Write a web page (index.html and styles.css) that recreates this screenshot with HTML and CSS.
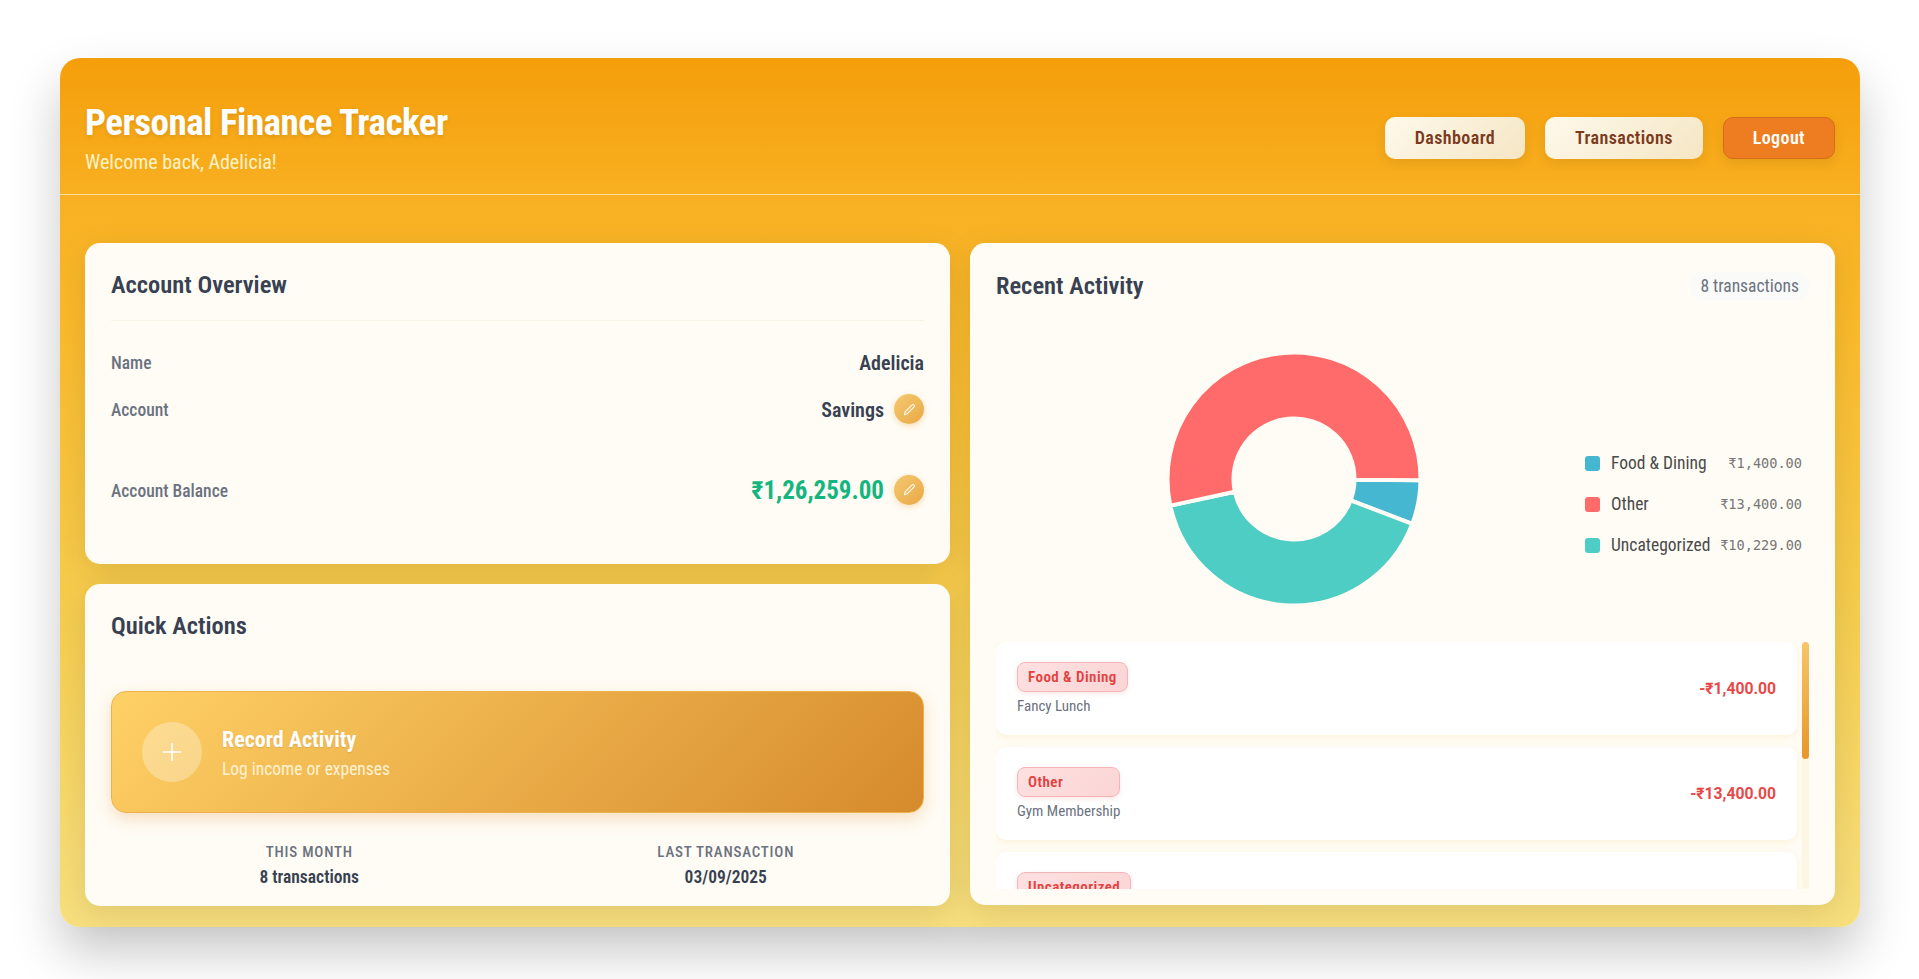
FILE: index.html
```html
<!DOCTYPE html>
<html lang="en">
<head>
    <meta charset="UTF-8">
    <meta name="viewport" content="width=device-width, initial-scale=1.0">
    <title>Personal Finance Tracker</title>
    <link rel="stylesheet" href="styles.css">
</head>
<body>
    <div class="app">
        <header class="header">
            <div class="brand">
                <h1>Personal Finance Tracker</h1>
                <p>Welcome back, Adelicia!</p>
            </div>
            <nav class="nav">
                <a class="nav-btn">Dashboard</a>
                <a class="nav-btn">Transactions</a>
                <a class="nav-btn logout">Logout</a>
            </nav>
        </header>

        <main class="main">
            <div class="left-col">
                <section class="card overview">
                    <h2 class="card-title">Account Overview</h2>
                    <div class="info-row name-row">
                        <span class="info-label">Name</span>
                        <span class="info-value">Adelicia</span>
                    </div>
                    <div class="info-row account-row">
                        <span class="info-label">Account</span>
                        <span class="info-value">Savings
                            <button class="edit-btn"><svg viewBox="0 0 16 16" width="15" height="15"><path d="M2.5 13.5l1-3.2 7.2-7.2a1.3 1.3 0 0 1 1.9 0l.3.3a1.3 1.3 0 0 1 0 1.9l-7.2 7.2z" fill="none" stroke="#fff" stroke-width="1.1" stroke-linejoin="round"/></svg></button>
                        </span>
                    </div>
                    <div class="info-row balance-row">
                        <span class="info-label">Account Balance</span>
                        <span class="info-value balance">₹1,26,259.00
                            <button class="edit-btn"><svg viewBox="0 0 16 16" width="15" height="15"><path d="M2.5 13.5l1-3.2 7.2-7.2a1.3 1.3 0 0 1 1.9 0l.3.3a1.3 1.3 0 0 1 0 1.9l-7.2 7.2z" fill="none" stroke="#fff" stroke-width="1.1" stroke-linejoin="round"/></svg></button>
                        </span>
                    </div>
                </section>

                <section class="card actions">
                    <h2 class="card-title plain">Quick Actions</h2>
                    <a class="record-btn">
                        <span class="record-icon"><svg viewBox="0 0 20 20" width="20" height="20"><path d="M10 1v18M1 10h18" stroke="#fff" stroke-width="1.6" fill="none"/></svg></span>
                        <span class="record-text">
                            <strong>Record Activity</strong>
                            <small>Log income or expenses</small>
                        </span>
                    </a>
                    <div class="stats">
                        <div class="stat">
                            <div class="stat-label">THIS MONTH</div>
                            <div class="stat-value">8 transactions</div>
                        </div>
                        <div class="stat">
                            <div class="stat-label">LAST TRANSACTION</div>
                            <div class="stat-value">03/09/2025</div>
                        </div>
                    </div>
                </section>
            </div>

            <section class="card activity">
                <div class="activity-head">
                    <h2 class="card-title plain">Recent Activity</h2>
                    <span class="count-pill">8 transactions</span>
                </div>

                <div class="chart-area">
                    <svg class="donut" viewBox="-130 -130 260 260" width="260" height="260">
                        <g transform="rotate(0.6)">
                            <path fill="#45b7d1" stroke="#fffcf5" stroke-width="4" d="M126.5 0A126.5 126.5 0 0 1 118.77 43.55L56.8 20.83A60.5 60.5 0 0 0 60.5 0Z"/>
                            <path fill="#4ecdc4" stroke="#fffcf5" stroke-width="4" d="M118.77 43.55A126.5 126.5 0 0 1 -123.39 27.88L-59.01 13.33A60.5 60.5 0 0 0 56.8 20.83Z"/>
                            <path fill="#ff6b6b" stroke="#fffcf5" stroke-width="4" d="M-123.39 27.88A126.5 126.5 0 1 1 126.5 0L60.5 0A60.5 60.5 0 1 0 -59.01 13.33Z"/>
                        </g>
                    </svg>
                    <ul class="legend">
                        <li><i class="swatch blue"></i><span class="legend-name">Food &amp; Dining</span><span class="legend-amt">₹1,400.00</span></li>
                        <li><i class="swatch red"></i><span class="legend-name">Other</span><span class="legend-amt">₹13,400.00</span></li>
                        <li><i class="swatch teal"></i><span class="legend-name">Uncategorized</span><span class="legend-amt">₹10,229.00</span></li>
                    </ul>
                </div>

                <div class="list-wrap">
                    <div class="tx-list">
                        <div class="tx">
                            <div class="tx-info">
                                <span class="tag">Food &amp; Dining</span>
                                <span class="tx-desc">Fancy Lunch</span>
                            </div>
                            <span class="tx-amt">-₹1,400.00</span>
                        </div>
                        <div class="tx">
                            <div class="tx-info">
                                <span class="tag">Other</span>
                                <span class="tx-desc">Gym Membership</span>
                            </div>
                            <span class="tx-amt">-₹13,400.00</span>
                        </div>
                        <div class="tx">
                            <div class="tx-info">
                                <span class="tag">Uncategorized</span>
                            </div>
                            <span class="tx-amt">-₹10,229.00</span>
                        </div>
                    </div>
                    <div class="scrollbar"><div class="thumb"></div></div>
                </div>
            </section>
        </main>
    </div>
</body>
</html>
```
FILE: styles.css
```css
* {
    box-sizing: border-box;
}
body {
    margin: 0;
    height: 979px;
    overflow: hidden;
    padding: 58px 59px 0 60px;
    background: #fff;
    font-family: Roboto, "Liberation Sans", sans-serif;
    font-stretch: 75%;
    color: #374151;
}
.app {
    height: 869px;
    border-radius: 20px;
    background: linear-gradient(180deg, #f59e0b 0%, #f8b224 18%, #fab92b 30%, #f5cd50 65%, #f7df7e 100%);
    box-shadow: 0 25px 50px rgba(0, 0, 0, 0.22);
}
.header {
    height: 137px;
    padding: 0 25px;
    display: flex;
    justify-content: space-between;
    align-items: center;
    border-bottom: 1px solid rgba(255, 255, 255, 0.6);
}
.brand {
    padding-top: 22px;
}
.brand h1 {
    margin: 0;
    font-size: 37px;
    font-weight: 700;
    letter-spacing: -0.5px;
    line-height: 44px;
    color: #fff;
    text-shadow: 0 2px 4px rgba(0, 0, 0, 0.1);
}
.brand p {
    margin: 5px 0 0;
    font-size: 20px;
    line-height: 24px;
    color: #fef3c7;
}
.nav {
    display: flex;
    gap: 20px;
    padding-top: 23px;
}
.nav-btn {
    display: flex;
    align-items: center;
    padding: 0 30px;
    height: 42px;
    border-radius: 10px;
    font-size: 18px;
    font-weight: 600;
    letter-spacing: 0.4px;
    color: #7c3a1d;
    background: linear-gradient(135deg, #fef9ec, #f5e6c4);
    box-shadow: 0 4px 12px rgba(0, 0, 0, 0.08);
}
.nav-btn.logout {
    padding: 0 29px;
    color: #fff;
    background: #ed7d20;
    border: 1px solid #d96a1a;
}
.main {
    display: grid;
    grid-template-columns: 865px 865px;
    gap: 20px;
    padding: 48px 25px 0;
}
.left-col {
    display: flex;
    flex-direction: column;
    gap: 20px;
}
.card {
    background: #fffcf5;
    border-radius: 15px;
    padding: 26px;
    box-shadow: 0 8px 32px rgba(0, 0, 0, 0.1);
}
.overview {
    height: 321px;
}
.actions {
    height: 322px;
}
.activity {
    height: 662px;
}
.card-title {
    margin: 0;
    padding: 1px 0 20px;
    font-size: 24.5px;
    font-weight: 600;
    line-height: 30px;
    color: #374151;
    border-bottom: 1px solid #f7f2e6;
}
.card-title.plain {
    border-bottom: 0;
}
.info-row {
    display: flex;
    justify-content: space-between;
    align-items: center;
}
.name-row {
    margin-top: 30px;
}
.account-row {
    margin-top: 21px;
}
.balance-row {
    margin-top: 52px;
}
.info-label {
    font-size: 17.5px;
    font-weight: 500;
    color: #6b7280;
}
.info-value {
    display: flex;
    align-items: center;
    gap: 10px;
    font-size: 20px;
    font-weight: 600;
    color: #374151;
}
.info-value.balance {
    font-size: 25px;
    font-weight: 700;
    color: #14b57f;
}
.edit-btn {
    width: 30px;
    height: 30px;
    margin-top: -2px;
    padding: 0;
    border: 0;
    border-radius: 50%;
    display: flex;
    align-items: center;
    justify-content: center;
    background: linear-gradient(135deg, #f5c96f, #e9a846);
    box-shadow: 0 2px 6px rgba(232, 163, 61, 0.35);
}
.record-btn {
    display: flex;
    align-items: center;
    gap: 20px;
    height: 122px;
    margin-top: 30px;
    padding: 0 30px;
    border-radius: 15px;
    background: linear-gradient(135deg, #ffd166, #d68a2c);
    border: 1px solid #eeb14a;
    box-shadow: 0 6px 16px rgba(214, 138, 44, 0.25);
    color: #fff;
}
.record-icon {
    width: 60px;
    height: 60px;
    border-radius: 50%;
    display: flex;
    align-items: center;
    justify-content: center;
    background: rgba(255, 255, 255, 0.3);
}
.record-text {
    display: flex;
    flex-direction: column;
    gap: 4px;
    padding-top: 2px;
}
.record-text strong {
    font-size: 22px;
    font-weight: 700;
    line-height: 28px;
    text-shadow: 0 1px 2px rgba(0, 0, 0, 0.1);
}
.record-text small {
    font-size: 17.5px;
    line-height: 22px;
    color: #fff3d6;
}
.stats {
    display: grid;
    grid-template-columns: 1fr 1fr;
    gap: 20px;
    margin-top: 29px;
    text-align: center;
}
.stat-label {
    font-size: 15px;
    font-weight: 500;
    letter-spacing: 0.8px;
    line-height: 20px;
    color: #6b7280;
}
.stat-value {
    margin-top: 4px;
    font-size: 17.5px;
    font-weight: 600;
    line-height: 22px;
    color: #374151;
}
.activity-head {
    display: flex;
    justify-content: space-between;
    align-items: flex-start;
}
.activity-head .card-title {
    padding-top: 2px;
}
.count-pill {
    margin-top: 3px;
    padding: 3px 10px;
    height: 28px;
    line-height: 22px;
    font-size: 17.5px;
    color: #6b7280;
    background: #fafaf8;
    border-radius: 12px;
}
.chart-area {
    position: relative;
    display: flex;
    align-items: flex-start;
    height: 321px;
}
.donut {
    position: absolute;
    left: 167.5px;
    top: 28px;
}
.legend {
    list-style: none;
    margin: 130px 7px 0 auto;
    padding: 0;
    display: flex;
    flex-direction: column;
    gap: 17px;
    width: 217px;
}
.legend li {
    display: flex;
    align-items: center;
    height: 24px;
}
.swatch {
    width: 15px;
    height: 15px;
    border-radius: 3px;
    margin-right: 11px;
}
.swatch.blue {
    background: #45b7d1;
}
.swatch.red {
    background: #ff6b6b;
}
.swatch.teal {
    background: #4ecdc4;
}
.legend-name {
    font-size: 17.5px;
    color: #4a4a4a;
}
.legend-amt {
    margin-left: auto;
    font-family: "DejaVu Sans Mono", monospace;
    font-stretch: 100%;
    font-size: 13.6px;
    color: #777;
}
.list-wrap {
    height: 247px;
    display: flex;
    gap: 5px;
    overflow: hidden;
}
.tx-list {
    flex: 1;
    display: flex;
    flex-direction: column;
    gap: 12px;
}
.tx {
    flex: none;
    height: 93px;
    padding: 20px 21px 0;
    display: flex;
    justify-content: space-between;
    align-items: flex-start;
    background: #fff;
    border-radius: 10px;
    box-shadow: 0 2px 6px rgba(245, 200, 100, 0.2);
}
.tx-info {
    display: flex;
    flex-direction: column;
    gap: 4px;
}
.tag {
    height: 30px;
    line-height: 28px;
    padding: 0 10px;
    font-size: 15px;
    font-weight: 600;
    letter-spacing: 0.45px;
    color: #e53e3e;
    background: linear-gradient(135deg, #fde0e0, #fcd5d5);
    border: 1px solid #f5b5b8;
    border-radius: 8px;
    box-shadow: 0 2px 5px rgba(229, 62, 62, 0.12);
}
.tx-desc {
    font-size: 15px;
    line-height: 20px;
    color: #6b7280;
}
.tx-amt {
    margin-top: 17px;
    font-size: 15.7px;
    font-stretch: 100%;
    font-weight: 700;
    color: #e84848;
}
.scrollbar {
    flex: none;
    width: 7px;
    background: #fdf6e3;
    border-radius: 4px;
}
.thumb {
    height: 117px;
    border-radius: 4px;
    background: linear-gradient(180deg, #f6c667, #e8962a);
}
```
